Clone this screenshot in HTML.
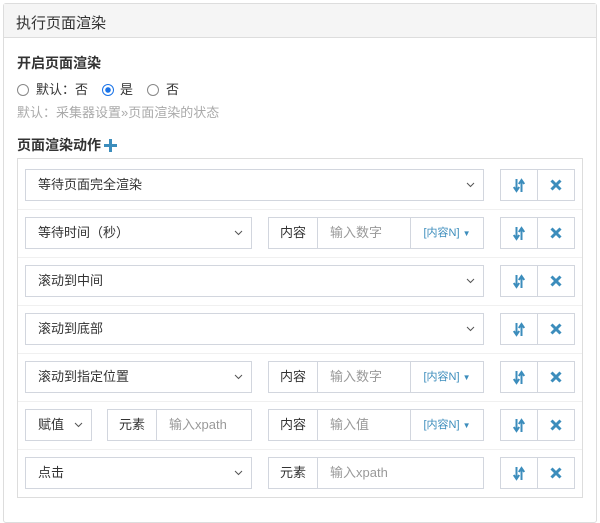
<!DOCTYPE html><html><head><meta charset="utf-8"><style>
*{box-sizing:border-box;margin:0;padding:0}
body{width:600px;height:502px;background:#fff;font-family:"Liberation Sans","Noto Sans CJK SC",sans-serif;font-size:13px;color:#333;position:relative;overflow:hidden}
.a{position:absolute}
.panel{left:3px;top:3px;width:594px;height:520px;border:1px solid #ddd;border-radius:3px}
.head{left:4px;top:4px;width:592px;height:34px;background:#f5f5f5;border-bottom:1px solid #ddd;font-size:15px;padding:8px 12px;color:#333}
.box{left:17px;top:158px;width:566px;height:340px;border:1px solid #ddd}
.sel{border:1px solid #d2d6de;height:32px;line-height:30px;padding-left:12px;background:#fff}
.sel svg{position:absolute;right:8px;top:12px}
.add{border:1px solid #d2d6de;height:32px;line-height:30px;text-align:center;background:#fff}
.inp{border:1px solid #d2d6de;border-left:none;height:32px;line-height:30px;padding-left:12px;color:#999}
.dd{border:1px solid #d2d6de;border-left:none;height:32px;line-height:30px;text-align:center;color:#3c8dbc;font-size:11px}
.bt{border:1px solid #d2d6de;height:32px;width:38px;color:#3c8dbc;text-align:center;line-height:30px;font-weight:bold;font-size:15px}
.sep{left:18px;width:564px;height:1px;background:#f0f0f0}
.rd{position:absolute;top:5px;width:12px;height:12px;border:1px solid #888;border-radius:50%}
</style></head><body>
<div class="a panel"></div>
<div class="a head">执行页面渲染</div>
<div class="a" style="left:17px;top:53px;font-weight:bold;font-size:14px">开启页面渲染</div>
<div class="a" style="left:17px;top:79px;width:200px;height:20px;font-size:13px">
<span class="rd" style="left:0"></span><span class="a" style="left:19px;top:0">默认：否</span>
<span class="rd" style="left:85px;border-color:#1a73e8;background:radial-gradient(#1a73e8 0 2.5px,#fff 3px)"></span><span class="a" style="left:103px;top:0">是</span>
<span class="rd" style="left:130px"></span><span class="a" style="left:149px;top:0">否</span></div>
<div class="a" style="left:17px;top:102px;color:#aaa">默认：采集器设置»页面渲染的状态</div>
<div class="a" style="left:17px;top:135px;font-weight:bold;font-size:14px">页面渲染动作</div>
<svg class="a" style="left:104px;top:139px" width="13" height="13"><path d="M6.5 0v13M0 6.5h13" stroke="#3c8dbc" stroke-width="3"/></svg>
<div class="a box"></div>
<div class="a sep" style="top:209px"></div><div class="a sep" style="top:257px"></div><div class="a sep" style="top:305px"></div><div class="a sep" style="top:353px"></div><div class="a sep" style="top:401px"></div><div class="a sep" style="top:449px"></div>

<div class="a sel" style="left:25px;top:169px;width:459px">等待页面完全渲染<svg width="9" height="6"><path d="M1 1l3.5 3.5L8 1" stroke="#555" fill="none"/></svg></div>
<div class="a sel" style="left:25px;top:217px;width:227px">等待时间（秒）<svg width="9" height="6"><path d="M1 1l3.5 3.5L8 1" stroke="#555" fill="none"/></svg></div>
<div class="a add" style="left:268px;top:217px;width:50px">内容</div><div class="a inp" style="left:318px;top:217px;width:93px">输入数字</div><div class="a dd" style="left:411px;top:217px;width:73px">[内容N] <span style="font-size:8px">▼</span></div>
<div class="a sel" style="left:25px;top:265px;width:459px">滚动到中间<svg width="9" height="6"><path d="M1 1l3.5 3.5L8 1" stroke="#555" fill="none"/></svg></div>
<div class="a sel" style="left:25px;top:313px;width:459px">滚动到底部<svg width="9" height="6"><path d="M1 1l3.5 3.5L8 1" stroke="#555" fill="none"/></svg></div>
<div class="a sel" style="left:25px;top:361px;width:227px">滚动到指定位置<svg width="9" height="6"><path d="M1 1l3.5 3.5L8 1" stroke="#555" fill="none"/></svg></div>
<div class="a add" style="left:268px;top:361px;width:50px">内容</div><div class="a inp" style="left:318px;top:361px;width:93px">输入数字</div><div class="a dd" style="left:411px;top:361px;width:73px">[内容N] <span style="font-size:8px">▼</span></div>
<div class="a sel" style="left:25px;top:409px;width:67px">赋值<svg width="9" height="6"><path d="M1 1l3.5 3.5L8 1" stroke="#555" fill="none"/></svg></div>
<div class="a add" style="left:107px;top:409px;width:50px">元素</div><div class="a inp" style="left:157px;top:409px;width:95px">输入xpath</div>
<div class="a add" style="left:268px;top:409px;width:50px">内容</div><div class="a inp" style="left:318px;top:409px;width:93px">输入值</div><div class="a dd" style="left:411px;top:409px;width:73px">[内容N] <span style="font-size:8px">▼</span></div>
<div class="a sel" style="left:25px;top:457px;width:227px">点击<svg width="9" height="6"><path d="M1 1l3.5 3.5L8 1" stroke="#555" fill="none"/></svg></div>
<div class="a add" style="left:268px;top:457px;width:50px">元素</div><div class="a inp" style="left:318px;top:457px;width:166px">输入xpath</div>

<div id="btns"></div>
<script>
var ys=[169,217,265,313,361,409,457],h='';
ys.forEach(function(y){h+='<div class="a bt" style="left:500px;top:'+y+'px"><svg width="12" height="15" style="margin-top:8px"><path d="M3.5 1v11M0.8 9l2.7 4 2.7-4M8.5 14V3M5.8 6l2.7-4 2.7 4" stroke="#3c8dbc" stroke-width="2" fill="none"/></svg></div><div class="a bt" style="left:537px;top:'+y+'px"><svg width="12" height="12" style="margin-top:9px"><path d="M1.5 1.5l9 9M10.5 1.5l-9 9" stroke="#3c8dbc" stroke-width="3"/></svg></div>';});
document.getElementById('btns').innerHTML=h;
</script>
</body></html>
